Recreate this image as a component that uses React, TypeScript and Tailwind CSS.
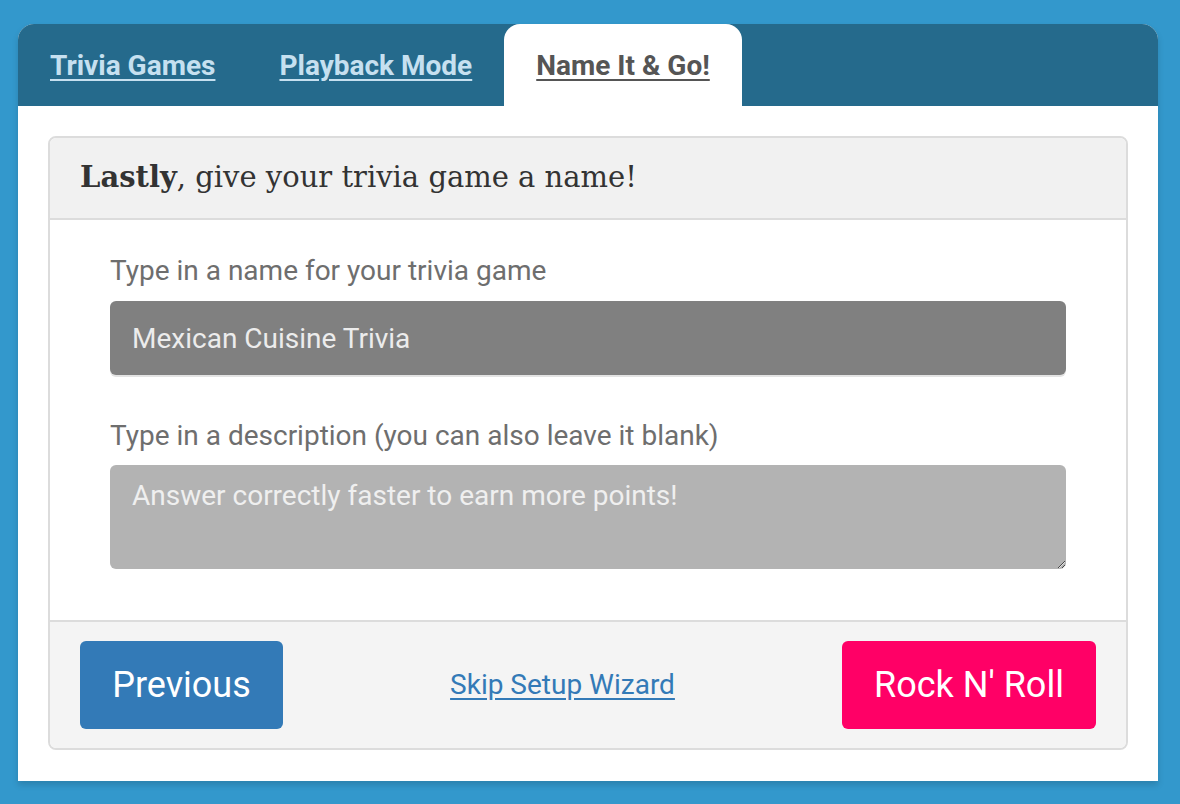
import { useState } from 'react'

const tabs = [
  { label: 'Trivia Games', active: false },
  { label: 'Playback Mode', active: false },
  { label: 'Name It & Go!', active: true },
]

export default function App() {
  const [name, setName] = useState('Mexican Cuisine Trivia')
  const [desc, setDesc] = useState('')

  return (
    <div className="min-h-[804px] bg-[#3398cc] pl-[18px] pr-[22px] pt-[24px] pb-[23px] font-['Roboto',sans-serif]">
      <div className="rounded-t-[16px] bg-white shadow-[0_4px_6px_rgba(0,0,0,0.15)]">
        {/* tab strip */}
        <div className="flex h-[82px] rounded-t-[16px] bg-[#256a8c]">
          {tabs.map((t) => (
            <a
              key={t.label}
              href="#"
              className={
                t.active
                  ? 'flex items-center rounded-t-[16px] bg-white px-[32px] pt-[1px] text-[28px] font-bold text-[#555] underline underline-offset-[4px] decoration-[2px]'
                  : 'flex items-center px-[32px] pt-[1px] text-[28px] font-bold text-[#c6e0f0] underline underline-offset-[4px] decoration-[2px]'
              }
            >
              {t.label}
            </a>
          ))}
        </div>

        <div className="px-[30px] pt-[30px] pb-[31px]">
          <div className="overflow-hidden rounded-[8px] border-2 border-[#dcdcdc]">
            <div className="flex h-[82px] items-center border-b-2 border-[#dcdcdc] bg-[#f1f1f1] px-[30px] font-['DejaVu_Serif',serif] text-[29px] text-[#333]">
              <span>
                <b>Lastly</b>, give your trivia game a name!
              </span>
            </div>

            <div className="bg-white px-[60px] pt-[35px] pb-[51px]">
              <label className="block text-[28px] leading-[32px] text-[#6e6e6e]">Type in a name for your trivia game</label>
              <input
                value={name}
                onChange={(e) => setName(e.target.value)}
                className="mt-[14px] block h-[74px] w-full rounded-[6px] bg-[#808080] px-[22px] text-[28px] text-[#ececec] shadow-[0_2px_0_#e3e3e3] outline-none"
              />

              <label className="mt-[45px] block text-[28px] leading-[32px] text-[#6e6e6e]">
                Type in a description (you can also leave it blank)
              </label>
              <textarea
                value={desc}
                onChange={(e) => setDesc(e.target.value)}
                placeholder="Answer correctly faster to earn more points!"
                className="mt-[13px] block h-[104px] w-full rounded-[6px] bg-[#b3b3b3] px-[22px] py-[10px] text-[28px] leading-[42px] text-[#f0f0f0] placeholder:text-[#efefef] outline-none"
              />
            </div>

            <div className="flex h-[128px] items-center justify-between border-t-2 border-[#dcdcdc] bg-[#f4f4f4] px-[30px]">
              <button className="h-[88px] w-[203px] rounded-[6px] bg-[#337ab7] text-[36px] text-white">Previous</button>
              <a href="#" className="text-[28px] text-[#337ab7] underline underline-offset-[4px]">
                Skip Setup Wizard
              </a>
              <button className="h-[88px] w-[254px] rounded-[6px] bg-[#ff0066] text-[36px] text-white">Rock N' Roll</button>
            </div>
          </div>
        </div>
      </div>
    </div>
  )
}
